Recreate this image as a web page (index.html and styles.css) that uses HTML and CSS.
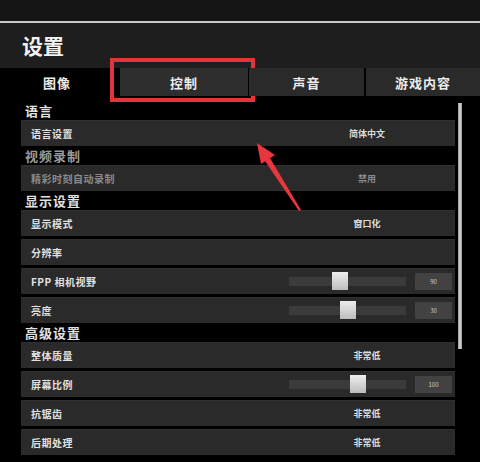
FILE: index.html
```html
<!DOCTYPE html>
<html lang="zh">
<head>
<meta charset="UTF-8">
<title>设置</title>
<link rel="stylesheet" href="styles.css">
</head>
<body>
  <div class="topbar"></div>
  <div class="header">
    <h1 class="title">设置</h1>
  </div>

  <div class="tabs">
    <div class="tab tab-plain">图像</div>
    <div class="tab tab-active">控制<span class="highlight"></span></div>
    <div class="tab tab-sound">声音</div>
    <div class="tab tab-game">游戏内容</div>
  </div>

  <div class="panel">
    <div class="list">
      <div class="section">语言</div>
      <div class="row">
        <span class="label">语言设置</span>
        <span class="value">简体中文</span>
      </div>

      <div class="section muted">视频录制</div>
      <div class="row muted">
        <span class="label">精彩时刻自动录制</span>
        <span class="value">禁用</span>
      </div>

      <div class="section">显示设置</div>
      <div class="row">
        <span class="label">显示模式</span>
        <span class="value">窗口化</span>
      </div>
      <div class="row">
        <span class="label">分辨率</span>
      </div>
      <div class="row">
        <span class="label">FPP 相机视野</span>
        <div class="slider">
          <div class="track"><span class="thumb" style="left: 43px"></span></div>
          <span class="num">90</span>
        </div>
      </div>
      <div class="row">
        <span class="label">亮度</span>
        <div class="slider">
          <div class="track"><span class="thumb" style="left: 51px"></span></div>
          <span class="num">30</span>
        </div>
      </div>

      <div class="section">高级设置</div>
      <div class="row">
        <span class="label">整体质量</span>
        <span class="value">非常低</span>
      </div>
      <div class="row">
        <span class="label">屏幕比例</span>
        <div class="slider">
          <div class="track"><span class="thumb" style="left: 61px"></span></div>
          <span class="num">100</span>
        </div>
      </div>
      <div class="row">
        <span class="label">抗锯齿</span>
        <span class="value">非常低</span>
      </div>
      <div class="row">
        <span class="label">后期处理</span>
        <span class="value">非常低</span>
      </div>
    </div>
    <div class="scrollbar"></div>
  </div>

  <!-- red arrow pointing at the tab -->
  <svg class="arrow" width="60" height="78" viewBox="0 0 60 78">
    <polygon points="7,5 25,17 11,26" fill="#e8363e"/>
    <polygon points="15,23 20,20 51,72 49,73" fill="#e8363e"/>
  </svg>
</body>
</html>
```

FILE: styles.css
```css
body {
  margin: 0;
  background-color: #000;
  font-family: "Noto Sans CJK SC", "Noto Sans", sans-serif;
  color: #e6e6e6;
  position: relative;
}

/* strip above the settings header */
.topbar {
  height: 21px;
  background-color: #151515;
  border-bottom: 2px solid #c9c9c9;
}

.header {
  height: 45px;
  background-color: #1e1e1e;
  padding-left: 22px;
}

.title {
  margin: 0;
  font-size: 21px;
  font-weight: bold;
  line-height: 44px;
  color: #f2f2f2;
}

/* tab bar */
.tabs {
  display: flex;
  height: 28px;
  background-color: #000;
}

.tab {
  position: relative;
  display: flex;
  align-items: center;
  justify-content: center;
  font-size: 13px;
  font-weight: bold;
  color: #ececec;
  letter-spacing: 1px;
}

.tab-plain {
  width: 114px;
  margin-right: 6px;
}

.tab-active {
  width: 128px;
  margin-right: 1px;
  background-color: #2e2e2e;
}

.tab-sound {
  width: 115px;
  margin-right: 2px;
  background-color: #2a2a2a;
}

.tab-game {
  flex: 1;
  background-color: #2a2a2a;
}

/* red box drawn over the active tab */
.highlight {
  position: absolute;
  left: -10px;
  right: -7px;
  top: -10px;
  bottom: -6px;
  border: 4px solid #e5323b;
}

/* settings list */
.panel {
  display: flex;
  padding: 8px 0 0 21px;
}

.list {
  width: 434px;
}

.scrollbar {
  width: 4px;
  height: 246px;
  margin: -1px 0 0 3px;
  background: linear-gradient(to right, #9a9a9a, #d8d8d8, #9a9a9a);
}

.section {
  height: 16px;
  line-height: 14px;
  padding-left: 4px;
  font-size: 13px;
  font-weight: bold;
  letter-spacing: 1px;
  color: #e2e2e2;
}

.section.muted {
  color: #9a9a9a;
}

.row {
  display: flex;
  align-items: center;
  height: 26px;
  margin-bottom: 3px;
  background-color: #2a2a2a;
  border-top: 1px solid #303030;
  box-sizing: border-box;
}

.label {
  width: 258px;
  box-sizing: border-box;
  padding-left: 10px;
  font-size: 10px;
  font-weight: bold;
  letter-spacing: 0.5px;
  color: #e0e0e0;
}

.value {
  flex: 1;
  text-align: center;
  font-size: 9px;
  font-weight: bold;
  color: #dcdcdc;
}

.row.muted .label,
.row.muted .value {
  color: #8a8a8a;
}

/* slider with number box */
.slider {
  display: flex;
  align-items: center;
  flex: 1;
  padding-left: 10px;
}

.track {
  position: relative;
  width: 117px;
  height: 9px;
  background-color: #3b3b3b;
}

.thumb {
  position: absolute;
  top: -5px;
  width: 16px;
  height: 18px;
  background: linear-gradient(#eeeeee, #bcbcbc);
}

.num {
  width: 37px;
  height: 17px;
  margin-left: 9px;
  background-color: #424242;
  font-size: 6px;
  line-height: 17px;
  text-align: center;
  color: #cfcfcf;
}

.arrow {
  position: absolute;
  left: 250px;
  top: 138px;
}
```
